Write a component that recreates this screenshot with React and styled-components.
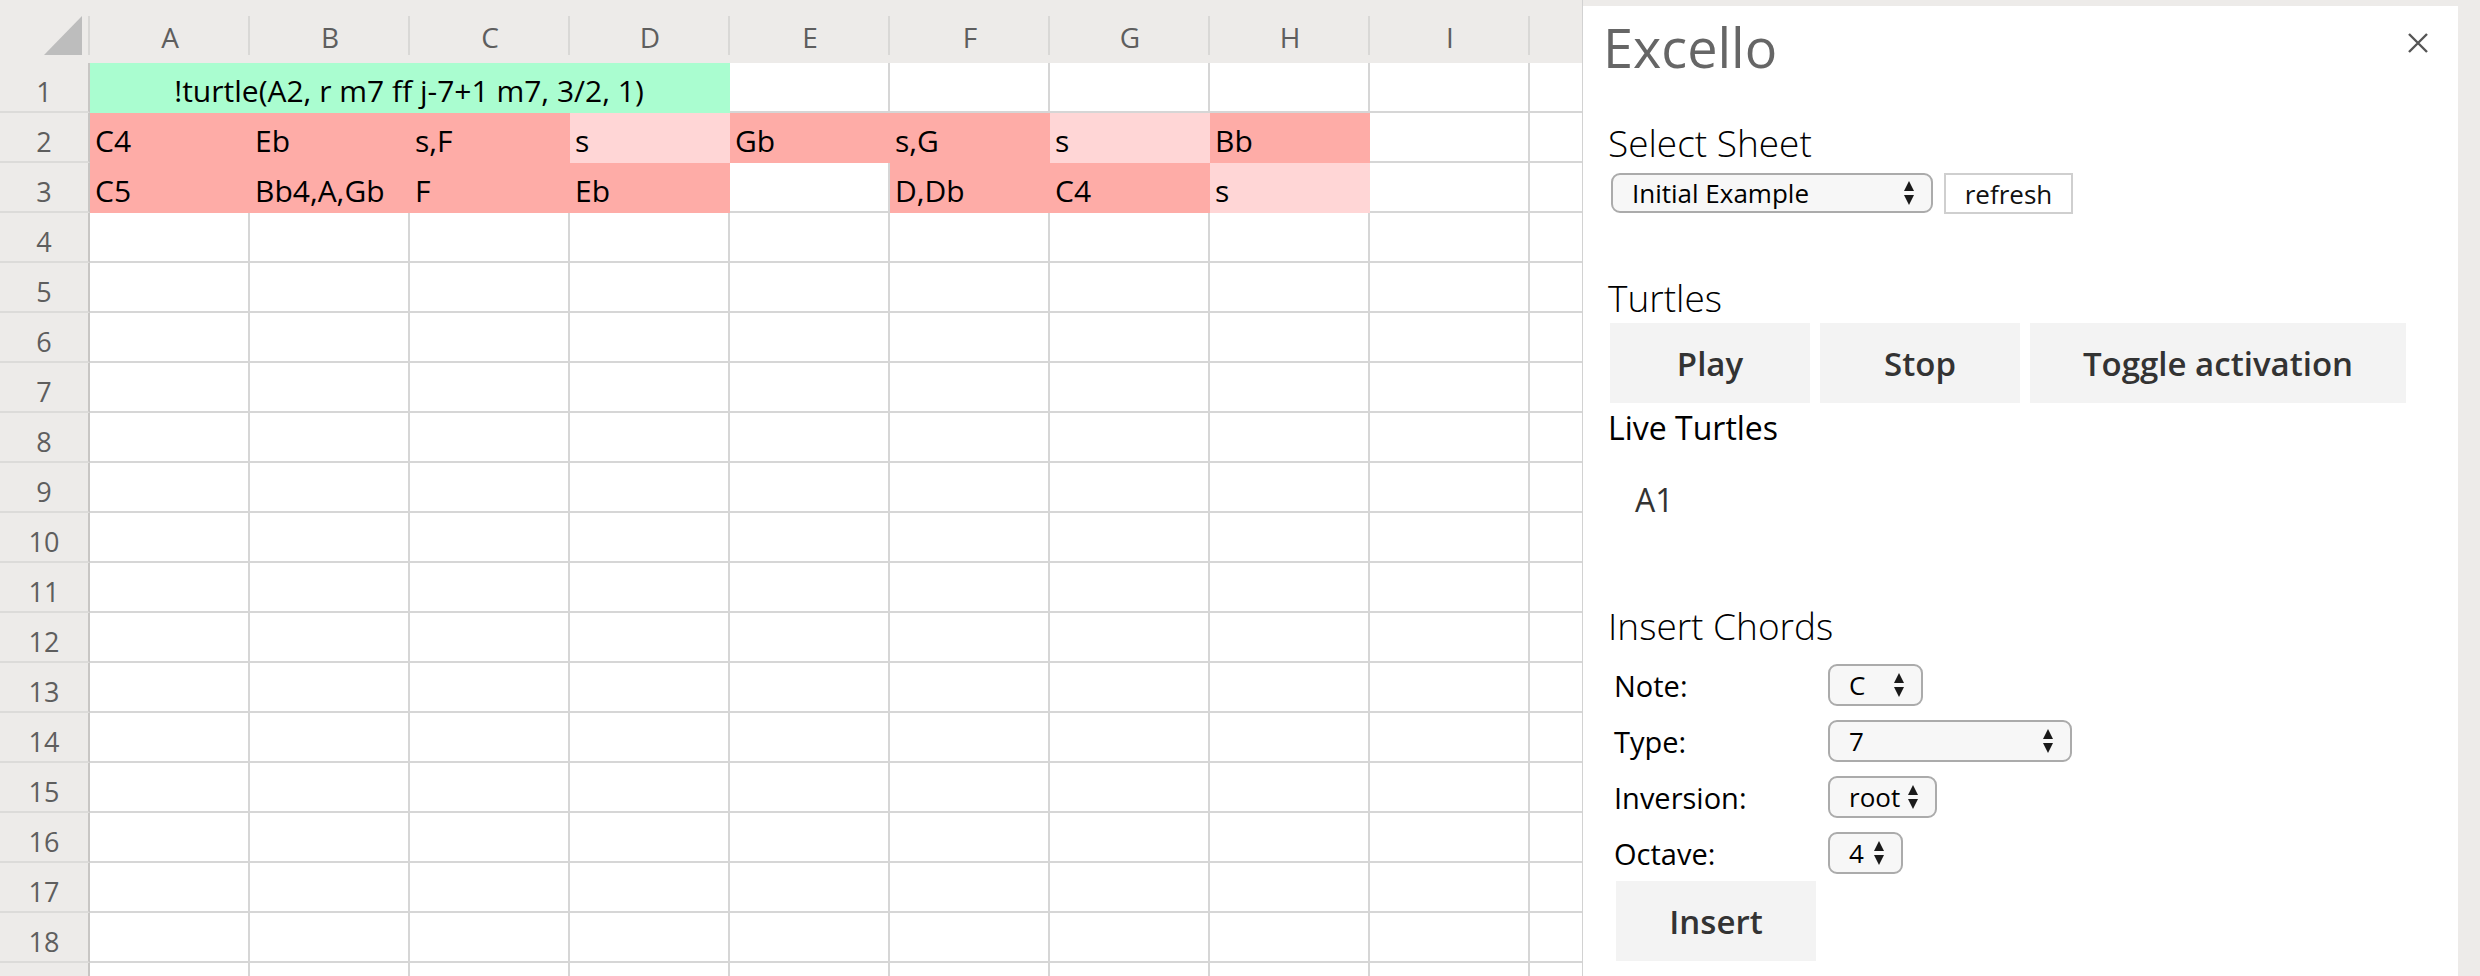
import React from "react";
import styled, { createGlobalStyle } from "styled-components";

const GlobalStyle = createGlobalStyle`
  html, body {
    margin: 0;
    padding: 0;
  }
  body {
    background: #edebe9;
    font-family: "Open Sans", "Noto Sans", sans-serif;
    overflow: hidden;
  }
`;

const FILLS = {
  green: "#aafdd0",
  red: "#feaca7",
  pink: "#ffd6d6",
};

// J is only a sliver behind the task pane, so its letter is never seen
const COLUMNS = ["A", "B", "C", "D", "E", "F", "G", "H", "I", ""];

const ROW2 = [
  ["red", "C4"],
  ["red", "Eb"],
  ["red", "s,F"],
  ["pink", "s"],
  ["red", "Gb"],
  ["red", "s,G"],
  ["pink", "s"],
  ["red", "Bb"],
  [null, ""],
  [null, ""],
];

const ROW3 = [
  ["red", "C5"],
  ["red", "Bb4,A,Gb"],
  ["red", "F"],
  ["red", "Eb"],
  [null, ""],
  ["red", "D,Db"],
  ["red", "C4"],
  ["pink", "s"],
  [null, ""],
  [null, ""],
];

const EMPTY = COLUMNS.map(() => [null, ""]);

export default function App() {
  const rows = [];
  for (let r = 1; r <= 19; r++) {
    if (r === 1) rows.push(null);
    else if (r === 2) rows.push(ROW2);
    else if (r === 3) rows.push(ROW3);
    else rows.push(EMPTY);
  }

  return (
    <>
      <GlobalStyle />
      <Page>
        <Sheet>
          <Corner>
            <svg width="90" height="63" viewBox="0 0 90 63">
              <polygon points="82,16 82,55 44,55" fill="#bdbdbd" />
            </svg>
          </Corner>
          {COLUMNS.map((c, i) => (
            <ColHeader key={i}>{c}</ColHeader>
          ))}

          {rows.map((cells, i) => (
            <React.Fragment key={i}>
              <RowHeader>{i < 18 ? i + 1 : ""}</RowHeader>
              {cells === null ? (
                <>
                  <Cell $fill="green" $span={4} $center>
                    !turtle(A2, r m7 ff j-7+1 m7, 3/2, 1)
                  </Cell>
                  {COLUMNS.slice(4).map((c, j) => (
                    <Cell key={j} />
                  ))}
                </>
              ) : (
                cells.map(([fill, text], j) => (
                  <Cell key={j} $fill={fill}>
                    {text}
                  </Cell>
                ))
              )}
            </React.Fragment>
          ))}
        </Sheet>

        <Panel>
          <PanelHeader>
            <Title>Excello</Title>
            <Close aria-label="close">
              <svg width="22" height="22" viewBox="0 0 22 22">
                <path
                  d="M2 2 L20 20 M20 2 L2 20"
                  stroke="#555"
                  strokeWidth="2.4"
                  fill="none"
                />
              </svg>
            </Close>
          </PanelHeader>

          <SectionTitle $top={37}>Select Sheet</SectionTitle>
          <SheetRow>
            <SelectBox $w={322} $h={40}>
              <span>Initial Example</span>
              <Arrows />
            </SelectBox>
            <RefreshButton>refresh</RefreshButton>
          </SheetRow>

          <SectionTitle $top={62}>Turtles</SectionTitle>
          <ButtonRow>
            <ActionButton $w={200}>Play</ActionButton>
            <ActionButton $w={200}>Stop</ActionButton>
            <ActionButton $w={376}>Toggle activation</ActionButton>
          </ButtonRow>
          <SubTitle>Live Turtles</SubTitle>
          <TurtleItem>A1</TurtleItem>

          <SectionTitle $top={85}>Insert Chords</SectionTitle>
          <ChordForm>
            <Label>Note:</Label>
            <SelectBox $w={95} $h={42}>
              <span>C</span>
              <Arrows />
            </SelectBox>
            <Label>Type:</Label>
            <SelectBox $w={244} $h={42}>
              <span>7</span>
              <Arrows />
            </SelectBox>
            <Label>Inversion:</Label>
            <SelectBox $w={109} $h={42}>
              <span>root</span>
              <Arrows />
            </SelectBox>
            <Label>Octave:</Label>
            <SelectBox $w={75} $h={42}>
              <span>4</span>
              <Arrows />
            </SelectBox>
          </ChordForm>
          <InsertButton $w={200}>Insert</InsertButton>
        </Panel>
      </Page>
    </>
  );
}

function Arrows() {
  return (
    <svg width="12" height="26" viewBox="0 0 12 26">
      <polygon points="1,11 6,1 11,11" fill="#1a1a1a" />
      <polygon points="1,15 11,15 6,25" fill="#1a1a1a" />
    </svg>
  );
}

const Page = styled.div`
  display: flex;
  height: 100vh;
  overflow: hidden;
`;

const Sheet = styled.div`
  flex: none;
  width: 1583px;
  box-sizing: border-box;
  border-right: 1px solid #d2d2d2;
  overflow: hidden;
  display: grid;
  grid-template-columns: 90px repeat(10, 160px);
  grid-template-rows: 63px;
  grid-auto-rows: 50px;
  align-content: start;
`;

const HeaderBase = styled.div`
  position: relative;
  background: #edebe9;
  &::after {
    content: "";
    position: absolute;
    right: 0;
    top: 16px;
    height: 39px;
    width: 2px;
    background: #d9d8d6;
  }
`;

const Corner = styled(HeaderBase)`
  svg {
    display: block;
  }
`;

const ColHeader = styled(HeaderBase)`
  display: flex;
  align-items: flex-end;
  justify-content: center;
  padding-bottom: 7px;
  box-sizing: border-box;
  font-size: 28px;
  color: #5e5e5e;
`;

const RowHeader = styled.div`
  box-sizing: border-box;
  background: #edebe9;
  border-right: 2px solid #c8c6c4;
  border-bottom: 2px solid #dcdbd9;
  display: flex;
  align-items: flex-end;
  justify-content: center;
  padding-bottom: 1px;
  font-size: 27px;
  color: #5e5e5e;
`;

const Cell = styled.div`
  box-sizing: border-box;
  grid-column: span ${(p) => p.$span || 1};
  background: ${(p) => (p.$fill ? FILLS[p.$fill] : "#fff")};
  border-right: 2px solid ${(p) => (p.$fill ? "transparent" : "#d6d6d6")};
  border-bottom: 2px solid ${(p) => (p.$fill ? "transparent" : "#d6d6d6")};
  display: flex;
  align-items: flex-end;
  justify-content: ${(p) => (p.$center ? "center" : "flex-start")};
  padding-left: ${(p) => (p.$center ? 0 : 5)}px;
  font-size: 30px;
  color: #000;
  white-space: nowrap;
  overflow: hidden;
`;

const Panel = styled.div`
  flex: 1;
  margin: 6px 22px 0 0;
  background: #fff;
  padding: 4px 29px 0 27px;
  display: flex;
  flex-direction: column;
  align-items: flex-start;
`;

const PanelHeader = styled.div`
  align-self: stretch;
  display: flex;
  justify-content: space-between;
  align-items: flex-start;
`;

const Title = styled.h1`
  margin: 0 0 0 -7px;
  font-size: 54px;
  font-weight: 400;
  color: #666;
`;

const Close = styled.div`
  margin-top: 22px;
  width: 22px;
  height: 22px;
  svg {
    display: block;
  }
`;

const SectionTitle = styled.h2`
  margin: ${(p) => p.$top}px 0 0 -2px;
  font-size: 37px;
  line-height: 44px;
  font-weight: 300;
  color: #000;
`;

const SheetRow = styled.div`
  margin: 8px 0 0 1px;
  display: flex;
  gap: 11px;
`;

const SelectBox = styled.div`
  box-sizing: border-box;
  width: ${(p) => p.$w}px;
  height: ${(p) => p.$h}px;
  border: 2px solid #ababab;
  border-radius: 9px;
  background: #f7f7f7;
  padding: 0 16px 0 19px;
  display: flex;
  align-items: center;
  justify-content: space-between;
  gap: 5px;
  font-size: 26px;
  color: #000;
  white-space: nowrap;
  svg {
    flex: none;
  }
`;

const RefreshButton = styled.div`
  box-sizing: border-box;
  width: 129px;
  height: 41px;
  border: 2px solid #cfcfcf;
  background: #fff;
  display: flex;
  align-items: center;
  justify-content: center;
  font-size: 26px;
  color: #111;
`;

const ButtonRow = styled.div`
  margin-top: 3px;
  display: flex;
  gap: 10px;
`;

const ActionButton = styled.div`
  width: ${(p) => p.$w}px;
  height: 80px;
  background: #f3f3f3;
  display: flex;
  align-items: center;
  justify-content: center;
  font-size: 33px;
  font-weight: 600;
  color: #333;
`;

const SubTitle = styled.div`
  margin: 6px 0 0 -2px;
  font-size: 32px;
  line-height: 38px;
  color: #000;
`;

const TurtleItem = styled.div`
  margin: 34px 0 0 25px;
  font-size: 32px;
  line-height: 38px;
  color: #333;
`;

const ChordForm = styled.div`
  margin: 16px 0 0 4px;
  display: grid;
  grid-template-columns: 214px auto;
  row-gap: 14px;
  align-items: center;
  justify-items: start;
`;

const Label = styled.div`
  font-size: 29px;
  color: #000;
`;

const InsertButton = styled(ActionButton)`
  margin: 7px 0 0 6px;
`;
